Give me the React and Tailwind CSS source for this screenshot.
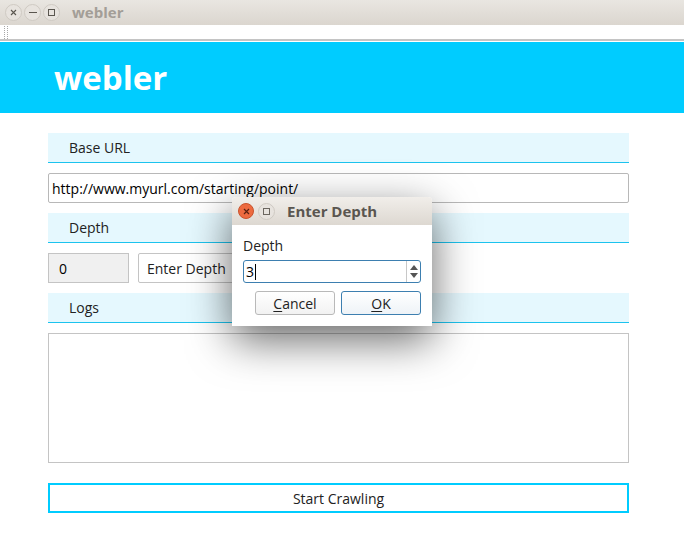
import React from 'react';

const font = { fontFamily: '"Open Sans", "DejaVu Sans", sans-serif' };

const SectionHeader = ({ label }) => (
  <div className="h-[30px] bg-[#e5f8fe] border-b border-[#1cc3ee] flex items-center pl-[21px] text-[14px] text-[#222]">
    {label}
  </div>
);

const WinButton = ({ children, className = '' }) => (
  <div className={`w-[17px] h-[17px] rounded-full flex items-center justify-center border border-[#cfcac3] bg-[#e7e3de] text-[#5a564f] ${className}`}>
    {children}
  </div>
);

const DepthDialog = () => (
  <div className="absolute left-[232px] top-[197px] w-[200px] h-[129px] rounded-t-[4px] bg-white shadow-[0_14px_44px_rgba(0,0,0,0.6)] flex flex-col">
    <div className="h-[28px] rounded-t-[4px] bg-gradient-to-b from-[#f1eeea] to-[#ddd8d1] flex items-center pl-[6px] gap-[4px]">
      <div className="w-[16px] h-[16px] rounded-full bg-[#ed6a3f] border border-[#c9532c] flex items-center justify-center">
        <svg width="7" height="7" viewBox="0 0 7 7"><path d="M1 1L6 6M6 1L1 6" stroke="#5a2010" strokeWidth="1.2" /></svg>
      </div>
      <WinButton className="w-[16px] h-[16px]">
        <div className="w-[7px] h-[7px] border border-[#6b665f]" />
      </WinButton>
      <span className="ml-[8px] text-[15px] font-bold text-[#5a5650]">Enter Depth</span>
    </div>
    <div className="flex flex-col px-[11px] pt-[12px]">
      <span className="text-[14px] text-[#222] leading-[18px]">Depth</span>
      <div className="mt-[5px] h-[23px] border border-[#3d7fb0] rounded-[3px] flex items-stretch">
        <div className="flex-1 flex items-center pl-[2px] text-[14px] text-black">
          3<span className="w-px h-[16px] bg-black ml-[1px]" />
        </div>
        <div className="w-[14px] border-l border-[#c8c8c8] flex flex-col items-center justify-center gap-[3px]">
          <svg width="8" height="5" viewBox="0 0 8 5"><path d="M0 5L4 0L8 5Z" fill="#555" /></svg>
          <svg width="8" height="5" viewBox="0 0 8 5"><path d="M0 0L4 5L8 0Z" fill="#555" /></svg>
        </div>
      </div>
      <div className="mt-[8px] flex justify-end gap-[6px]">
        <button className="w-[80px] h-[24px] border border-[#b9b9b9] rounded-[3px] bg-gradient-to-b from-white to-[#f2f2f2] text-[14px] text-[#222]">
          <span className="underline underline-offset-2">C</span>ancel
        </button>
        <button className="w-[80px] h-[24px] border border-[#3d7fb0] rounded-[3px] bg-gradient-to-b from-white to-[#eef3f7] text-[14px] text-[#222]">
          <span className="underline underline-offset-2">O</span>K
        </button>
      </div>
    </div>
  </div>
);

export default function App() {
  return (
    <div className="relative w-[684px] h-[547px] bg-white overflow-hidden" style={font}>
      {/* window title bar */}
      <div className="h-[25px] bg-gradient-to-b from-[#e9e6e1] to-[#dbd6cf] flex items-center pl-[5px] gap-[2px]">
        <WinButton>
          <svg width="7" height="7" viewBox="0 0 7 7"><path d="M1 1L6 6M6 1L1 6" stroke="#5a564f" strokeWidth="1.1" /></svg>
        </WinButton>
        <WinButton>
          <div className="w-[8px] h-px bg-[#5a564f]" />
        </WinButton>
        <WinButton>
          <div className="w-[7px] h-[7px] border border-[#5a564f]" />
        </WinButton>
        <span className="ml-[10px] text-[15px] font-bold text-[#a39e97]">webler</span>
      </div>
      {/* toolbar strip */}
      <div className="h-[16px] border-b-2 border-[#c4c4c4] flex items-center pl-[4px]">
        <div className="h-[13px] w-[4px] border-l border-r border-dotted border-[#a8a8a8]" />
      </div>
      {/* banner */}
      <div className="mt-[1px] h-[71px] bg-[#00ccff] flex items-center pl-[54px]">
        <span className="text-[33px] font-bold text-white">webler</span>
      </div>
      {/* content */}
      <div className="ml-[48px] w-[581px] mt-[20px] flex flex-col gap-[10px]">
        <SectionHeader label="Base URL" />
        <div className="h-[30px] border border-[#b8b8b8] rounded-[2px] flex items-center pl-[3px] text-[14px] text-black">
          http://www.myurl.com/starting/point/
        </div>
        <SectionHeader label="Depth" />
        <div className="flex gap-[9px] h-[30px]">
          <div className="w-[81px] bg-[#f0f0f0] border border-[#c4c4c4] flex items-center pl-[10px] text-[14px] text-black">0</div>
          <button className="w-[110px] border border-[#c4c4c4] rounded-[2px] bg-white flex items-center pl-[8px] text-[14px] text-[#222]">Enter Depth</button>
        </div>
        <SectionHeader label="Logs" />
        <div className="h-[130px] border border-[#c4c4c4]" />
        <button className="mt-[10px] h-[30px] border-2 border-[#00ccff] bg-white text-[14px] text-[#222]">Start Crawling</button>
      </div>
      <DepthDialog />
    </div>
  );
}
